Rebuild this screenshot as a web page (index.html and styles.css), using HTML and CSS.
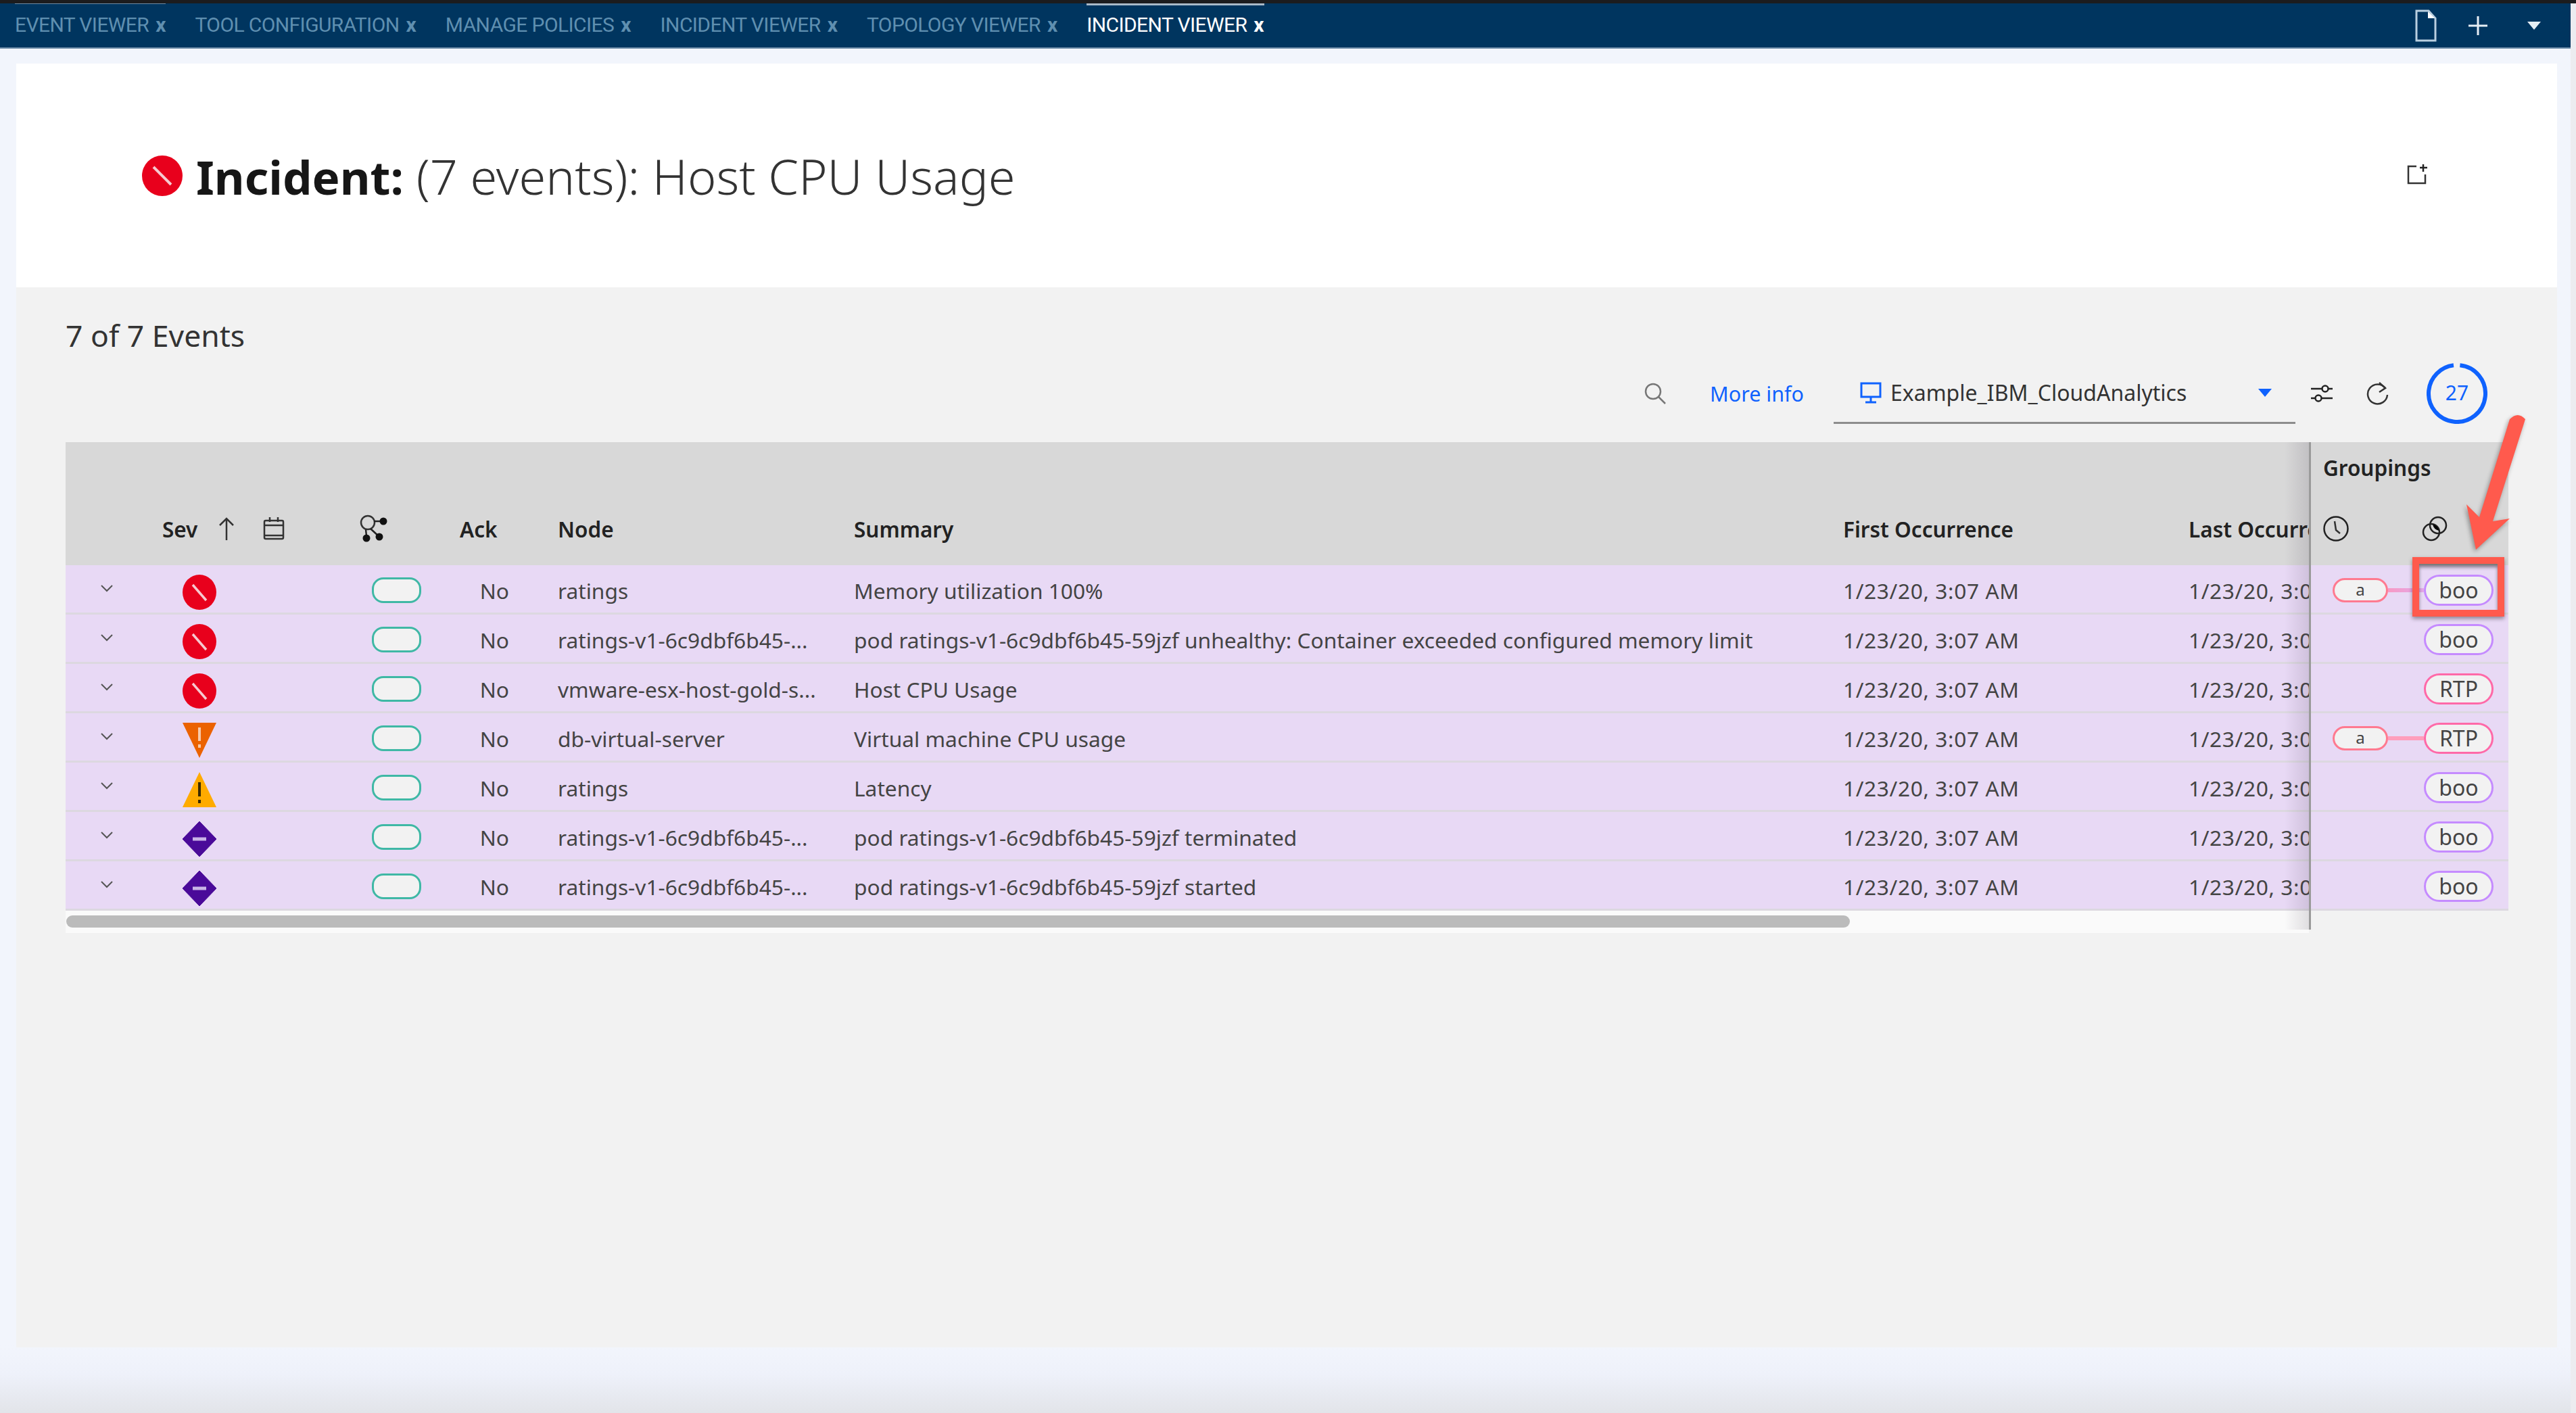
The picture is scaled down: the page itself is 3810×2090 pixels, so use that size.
FILE: index.html
```html
<!DOCTYPE html>
<html>
    <head>
        <meta charset="utf-8">
        <title>Incident Viewer</title>
        <link rel="stylesheet" href="styles.css">
    </head>
    <body>
        <!-- icons used several times -->
        <svg class="defs" width="0" height="0">
            <symbol id="sev-critical" viewBox="0 0 50 52">
                <ellipse cx="25" cy="26" rx="25" ry="26" fill="#e8001c"/>
                <path d="M15 15 L35 38" stroke="#f6c9d0" stroke-width="3.5"/>
            </symbol>
            <symbol id="sev-major" viewBox="0 0 50 52">
                <path d="M0 0 H50 L25 52 Z" fill="#eb6200"/>
                <path d="M25 7 V27 M25 32 V37" stroke="#f7c9a8" stroke-width="4"/>
            </symbol>
            <symbol id="sev-minor" viewBox="0 0 50 52">
                <path d="M25 0 L50 52 H0 Z" fill="#ffab00"/>
                <path d="M25 15 V36 M25 41 V46" stroke="#3b2a00" stroke-width="4"/>
            </symbol>
            <symbol id="sev-info" viewBox="0 0 50 52">
                <path d="M25 0 L50 26 L25 52 L0 26 Z" fill="#4a0a99" stroke="#4a0a99" stroke-width="1" stroke-linejoin="round"/>
                <path d="M15 26 H35" stroke="#c9b4e6" stroke-width="5"/>
            </symbol>
            <symbol id="chevron" viewBox="0 0 20 12">
                <path d="M2 2 L10 10 L18 2" fill="none" stroke="#555" stroke-width="2"/>
            </symbol>
        </svg>

        <div class="app">
            <nav class="tabs">
                <a class="tab tab-first">EVENT VIEWER<span class="tab-close">x</span></a>
                <a class="tab">TOOL CONFIGURATION<span class="tab-close">x</span></a>
                <a class="tab">MANAGE POLICIES<span class="tab-close">x</span></a>
                <a class="tab">INCIDENT VIEWER<span class="tab-close">x</span></a>
                <a class="tab">TOPOLOGY VIEWER<span class="tab-close">x</span></a>
                <a class="tab tab-active">INCIDENT VIEWER<span class="tab-close">x</span></a>
                <div class="tab-actions">
                    <svg class="icon-doc" viewBox="0 0 32 48"><path d="M2 2 H20 L30 13 V46 H2 Z" fill="none" stroke="#b9cfe0" stroke-width="3"/><path d="M19 3 L29 13 H19 Z" fill="#fff"/></svg>
                    <svg class="icon-plus" viewBox="0 0 28 28"><path d="M14 0 V28 M0 14 H28" stroke="#e6eef5" stroke-width="3"/></svg>
                    <svg class="icon-caret" viewBox="0 0 20 12"><path d="M0 0 H20 L10 12 Z" fill="#e6eef5"/></svg>
                </div>
            </nav>

            <main class="page">
                <header class="title-panel">
                    <svg class="title-icon" viewBox="0 0 60 60">
                        <circle cx="30" cy="30" r="30" fill="#e8001c"/>
                        <path d="M17 17 L43 43" stroke="#f6c9d0" stroke-width="4"/>
                    </svg>
                    <h1 class="title"><b>Incident:</b> (7 events): Host CPU Usage</h1>
                    <svg class="icon-add" viewBox="0 0 30 30"><path d="M14 3 H2 V28 H27 V15" fill="none" stroke="#333" stroke-width="2.5"/><path d="M24 0 V11 M19 5 H30" stroke="#222" stroke-width="2.5"/></svg>
                </header>

                <section class="events">
                    <h2 class="count">7 of 7 Events</h2>

                    <div class="toolbar">
                        <svg class="icon-search" viewBox="0 0 34 34"><circle cx="14" cy="14" r="11" fill="none" stroke="#777" stroke-width="2.5"/><path d="M22 22 L32 32" stroke="#777" stroke-width="2.5"/></svg>
                        <a class="more-info">More info</a>
                        <div class="dropdown">
                            <svg class="icon-monitor" viewBox="0 0 32 32"><rect x="2" y="2" width="28" height="20" fill="none" stroke="#0f62fe" stroke-width="3"/><path d="M16 22 V29 M8 30 H24" stroke="#0f62fe" stroke-width="3"/></svg>
                            <span class="dropdown-text">Example_IBM_CloudAnalytics</span>
                            <svg class="icon-drop" viewBox="0 0 20 12"><path d="M0 0 H20 L10 12 Z" fill="#0f62fe"/></svg>
                        </div>
                        <svg class="icon-sliders" viewBox="0 0 36 32"><path d="M2 9 H34 M2 23 H34" stroke="#222" stroke-width="2.5"/><circle cx="23" cy="9" r="4.5" fill="#f2f2f2" stroke="#222" stroke-width="2.5"/><circle cx="13" cy="23" r="4.5" fill="#f2f2f2" stroke="#222" stroke-width="2.5"/></svg>
                        <svg class="icon-refresh" viewBox="0 0 36 36"><path d="M29 10 A14.5 14.5 0 1 0 32 20" fill="none" stroke="#333" stroke-width="2.5"/><path d="M20 2 L29 10 L20 16" fill="none" stroke="#333" stroke-width="2.5"/></svg>
                        <svg class="ring" viewBox="0 0 90 90">
                            <circle cx="45" cy="45" r="42" fill="none" stroke="#0f62fe" stroke-width="6" stroke-dasharray="254 10" transform="rotate(-84 45 45)"/>
                            <text class="ring-text" x="45" y="55" text-anchor="middle">27</text>
                        </svg>
                    </div>

                    <div class="table">
                        <div class="table-main">
                            <div class="grid head">
                                <span></span>
                                <span class="head-sev">Sev
                                    <svg class="icon-up" viewBox="0 0 24 36"><path d="M12 35 V3 M2 13 L12 3 L22 13" fill="none" stroke="#333" stroke-width="2.5"/></svg>
                                    <svg class="icon-cal" viewBox="0 0 32 34"><rect x="2" y="5" width="28" height="27" rx="2" fill="none" stroke="#333" stroke-width="2.5"/><path d="M2 12 H30 M2 27 H30 M10 0 V7 M22 0 V7" stroke="#333" stroke-width="2.5"/></svg>
                                </span>
                                <span><svg class="icon-cluster" viewBox="0 0 42 42"><circle cx="13" cy="12" r="10" fill="none" stroke="#333" stroke-width="2.5"/><path d="M22 10 H36 M17 21 L29 32 M10 22 L11 32" stroke="#222" stroke-width="2.5"/><circle cx="36" cy="10" r="5.5" fill="#111"/><circle cx="11" cy="35" r="5.5" fill="#111"/><circle cx="30" cy="33" r="5.5" fill="#111"/></svg></span>
                                <span>Ack</span>
                                <span>Node</span>
                                <span>Summary</span>
                                <span>First Occurrence</span>
                                <span>Last Occurrence</span>
                            </div>

                            <div class="grid row">
                                <svg class="chevron"><use href="#chevron"/></svg>
                                <svg class="sev"><use href="#sev-critical"/></svg>
                                <i class="pill"></i>
                                <span class="ack">No</span>
                                <span class="cell">ratings</span>
                                <span class="cell">Memory utilization 100%</span>
                                <span class="cell date">1/23/20, 3:07 AM</span>
                                <span class="cell date">1/23/20, 3:07 AM</span>
                            </div>
                            <div class="grid row">
                                <svg class="chevron"><use href="#chevron"/></svg>
                                <svg class="sev"><use href="#sev-critical"/></svg>
                                <i class="pill"></i>
                                <span class="ack">No</span>
                                <span class="cell">ratings-v1-6c9dbf6b45-...</span>
                                <span class="cell">pod ratings-v1-6c9dbf6b45-59jzf unhealthy: Container exceeded configured memory limit</span>
                                <span class="cell date">1/23/20, 3:07 AM</span>
                                <span class="cell date">1/23/20, 3:07 AM</span>
                            </div>
                            <div class="grid row">
                                <svg class="chevron"><use href="#chevron"/></svg>
                                <svg class="sev"><use href="#sev-critical"/></svg>
                                <i class="pill"></i>
                                <span class="ack">No</span>
                                <span class="cell">vmware-esx-host-gold-s...</span>
                                <span class="cell">Host CPU Usage</span>
                                <span class="cell date">1/23/20, 3:07 AM</span>
                                <span class="cell date">1/23/20, 3:07 AM</span>
                            </div>
                            <div class="grid row">
                                <svg class="chevron"><use href="#chevron"/></svg>
                                <svg class="sev"><use href="#sev-major"/></svg>
                                <i class="pill"></i>
                                <span class="ack">No</span>
                                <span class="cell">db-virtual-server</span>
                                <span class="cell">Virtual machine CPU usage</span>
                                <span class="cell date">1/23/20, 3:07 AM</span>
                                <span class="cell date">1/23/20, 3:07 AM</span>
                            </div>
                            <div class="grid row">
                                <svg class="chevron"><use href="#chevron"/></svg>
                                <svg class="sev"><use href="#sev-minor"/></svg>
                                <i class="pill"></i>
                                <span class="ack">No</span>
                                <span class="cell">ratings</span>
                                <span class="cell">Latency</span>
                                <span class="cell date">1/23/20, 3:07 AM</span>
                                <span class="cell date">1/23/20, 3:07 AM</span>
                            </div>
                            <div class="grid row">
                                <svg class="chevron"><use href="#chevron"/></svg>
                                <svg class="sev"><use href="#sev-info"/></svg>
                                <i class="pill"></i>
                                <span class="ack">No</span>
                                <span class="cell">ratings-v1-6c9dbf6b45-...</span>
                                <span class="cell">pod ratings-v1-6c9dbf6b45-59jzf terminated</span>
                                <span class="cell date">1/23/20, 3:07 AM</span>
                                <span class="cell date">1/23/20, 3:07 AM</span>
                            </div>
                            <div class="grid row">
                                <svg class="chevron"><use href="#chevron"/></svg>
                                <svg class="sev"><use href="#sev-info"/></svg>
                                <i class="pill"></i>
                                <span class="ack">No</span>
                                <span class="cell">ratings-v1-6c9dbf6b45-...</span>
                                <span class="cell">pod ratings-v1-6c9dbf6b45-59jzf started</span>
                                <span class="cell date">1/23/20, 3:07 AM</span>
                                <span class="cell date">1/23/20, 3:07 AM</span>
                            </div>

                            <div class="scrollbar"><div class="scroll-thumb"></div></div>
                        </div>

                        <div class="groupings">
                            <div class="group-head">
                                <div class="group-title">Groupings</div>
                                <div class="group-icons">
                                    <svg class="icon-clock" viewBox="0 0 38 38"><circle cx="19" cy="19" r="17.5" fill="none" stroke="#222" stroke-width="2.5"/><path d="M17 8 L19 21 L25 26" fill="none" stroke="#333" stroke-width="2.5"/></svg>
                                    <svg class="icon-overlap" viewBox="0 0 38 38"><circle cx="14" cy="24" r="12" fill="none" stroke="#222" stroke-width="2.5"/><circle cx="24" cy="14" r="12" fill="none" stroke="#222" stroke-width="2.5"/><path d="M16 12.5 A12 12 0 0 1 25.5 22 A12 12 0 0 1 16 12.5 Z" fill="#000"/></svg>
                                </div>
                            </div>
                            <div class="group-row"><span class="tag-a">a</span><i class="link link-boo"></i><span class="tag tag-boo">boo</span></div>
                            <div class="group-row"><span class="tag tag-boo">boo</span></div>
                            <div class="group-row"><span class="tag tag-rtp">RTP</span></div>
                            <div class="group-row"><span class="tag-a">a</span><i class="link"></i><span class="tag tag-rtp">RTP</span></div>
                            <div class="group-row"><span class="tag tag-boo">boo</span></div>
                            <div class="group-row"><span class="tag tag-boo">boo</span></div>
                            <div class="group-row"><span class="tag tag-boo">boo</span></div>
                        </div>

                        <!-- annotation over the table -->
                        <div class="callout-box"></div>
                        <svg class="callout-arrow" viewBox="0 0 150 230"><path d="M62 213 L48 146 L67 165 L112 20 Q124 8 135 20 L87 171 L112 167 Z" fill="#ff5a4d"/></svg>
                    </div>
                </section>
            </main>
        </div>
    </body>
</html>
```

FILE: styles.css
```css
* {
    margin: 0;
    padding: 0;
    box-sizing: border-box;
}
html, body {
    height: 2090px;
    overflow: hidden;
}
body {
    background: #ececf0;
    border-top: 5px solid #1c1c1e;
    font-family: "Noto Sans", "Liberation Sans", sans-serif;
    color: #333;
}
.defs {
    display: block;
    height: 0;
}
.app {
    width: 3802px;
    height: 2085px;
    background: linear-gradient(to bottom, #f2f5fc 1985px, #eef1fa 2028px, #e2e4e9 2085px);
}

/* top tab bar */
.tabs {
    height: 67px;
    background: #00355f;
    border-bottom: 2px solid #6c8ba6;
    display: flex;
    align-items: center;
    padding-left: 22px;
    gap: 43px;
}
.tab {
    position: relative;
    height: 65px;
    line-height: 64px;
    font-family: "Roboto", sans-serif;
    font-size: 30px;
    letter-spacing: -0.6px;
    color: #5f8fb0;
    white-space: nowrap;
}
.tab-close {
    margin-left: 10px;
    font-weight: 700;
    font-size: 30px;
    letter-spacing: 0;
}
.tab-first::before, .tab-active::before {
    content: "";
    position: absolute;
    left: 0;
    right: 0;
    top: -1px;
    height: 2px;
    background: #6c8ba6;
}
.tab-active {
    color: #fff;
}
.tab-active::before {
    height: 4px;
    background: #a9b9c8;
}
.tab-actions {
    margin-left: auto;
    display: flex;
    align-items: center;
    padding-right: 44px;
}
.icon-doc {
    width: 32px;
    height: 48px;
}
.icon-plus {
    width: 28px;
    height: 28px;
    margin-left: 47px;
}
.icon-caret {
    width: 20px;
    height: 12px;
    margin-left: 59px;
}

/* page */
.page {
    margin: 22px 20px 0 24px;
    height: 1899px;
    display: flex;
    flex-direction: column;
}
.title-panel {
    height: 331px;
    flex: none;
    background: #fff;
    display: flex;
    align-items: center;
    padding: 0 192px 0 186px;
}
.title-icon {
    width: 60px;
    height: 60px;
    flex: none;
}
.title {
    margin-left: 20px;
    font-size: 72px;
    font-weight: 300;
    color: #333;
    white-space: nowrap;
}
.title b {
    font-size: 69px;
    font-weight: 700;
    color: #161616;
}
.icon-add {
    width: 30px;
    height: 30px;
    margin-left: auto;
    margin-top: -4px;
}

.events {
    flex: 1;
    background: #f2f2f2;
    padding: 44px 72px 0 73px;
}
.count {
    font-size: 44.5px;
    font-weight: 400;
    line-height: 54px;
    color: #333;
}
.toolbar {
    height: 90px;
    margin-top: 14px;
    display: flex;
    justify-content: flex-end;
    align-items: center;
    padding-right: 31px;
}
.icon-search {
    width: 34px;
    height: 34px;
}
.more-info {
    margin-left: 64px;
    font-size: 30.5px;
    color: #0f62fe;
}
.dropdown {
    width: 683px;
    height: 90px;
    margin-left: 44px;
    border-bottom: 3px solid #8d8d8d;
    display: flex;
    align-items: center;
    padding: 0 35px 0 39px;
    font-size: 32px;
}
.icon-monitor {
    width: 32px;
    height: 32px;
}
.dropdown-text {
    margin-left: 13px;
}
.icon-drop {
    width: 20px;
    height: 12px;
    margin-left: auto;
}
.icon-sliders {
    width: 36px;
    height: 32px;
    margin-left: 21px;
}
.icon-refresh {
    width: 36px;
    height: 36px;
    margin-left: 47px;
}
.ring {
    width: 90px;
    height: 90px;
    margin-left: 54px;
}
.ring-text {
    font-size: 30px;
    fill: #0f62fe;
}

/* table */
.table {
    position: relative;
    margin-top: 27px;
    display: flex;
    align-items: flex-start;
}
.table-main {
    width: 3318px;
    overflow: hidden;
    flex: none;
}
.grid {
    display: grid;
    grid-template-columns: 143px 310px 130px 145px 438px 1463px 511px 400px;
    align-items: center;
    white-space: nowrap;
}
.head {
    height: 182px;
    padding-top: 74px;
    background: #d8d8d8;
    font-size: 31.5px;
    font-weight: 600;
    color: #222;
}
.head-sev {
    display: flex;
    align-items: center;
}
.icon-up {
    width: 24px;
    height: 36px;
    margin-left: 31px;
}
.icon-cal {
    width: 32px;
    height: 34px;
    margin-left: 42px;
}
.icon-cluster {
    display: block;
    width: 42px;
    height: 42px;
    margin-left: -19px;
}
.row {
    height: 73px;
    background: #e8d9f5;
    border-bottom: 3px solid #dcd8e0;
    font-size: 31.7px;
    color: #444;
}
.cell, .ack {
    padding-top: 4px;
}
.date {
    letter-spacing: 0.6px;
}
.chevron {
    width: 20px;
    height: 12px;
    margin: -2px 0 0 51px;
}
.sev {
    width: 50px;
    height: 52px;
    margin: 10px 0 0 30px;
}
.pill {
    display: block;
    width: 73px;
    height: 38px;
    margin-top: 4px;
    border: 3px solid #3fb8a5;
    border-radius: 17px;
    background: #f2f2f2;
}
.ack {
    width: 73px;
    text-align: right;
}
.scrollbar {
    height: 33px;
    background: #fafafa;
    padding: 7px 0 0 1px;
}
.scroll-thumb {
    width: 2638px;
    height: 18px;
    background: #bbb;
    border-radius: 9px;
}

/* sticky groupings column */
.groupings {
    position: relative;
    width: 295px;
    flex: none;
    height: 721px;
    border-left: 3px solid #9a9a9a;
    background: #f2f2f2;
}
.groupings::before {
    content: "";
    position: absolute;
    left: -39px;
    top: 0;
    bottom: 0;
    width: 36px;
    background: linear-gradient(to right, rgba(60, 50, 70, 0), rgba(60, 50, 70, 0.14));
}
.group-head {
    height: 182px;
    background: #d8d8d8;
    padding: 18px 0 0 18px;
    font-size: 31.5px;
    font-weight: 600;
    color: #222;
}
.group-title {
    line-height: 40px;
}
.group-icons {
    display: flex;
    margin-top: 51px;
}
.icon-clock, .icon-overlap {
    width: 38px;
    height: 38px;
}
.icon-overlap {
    margin-left: 108px;
}
.group-row {
    height: 73px;
    background: #e8d9f5;
    border-bottom: 3px solid #dcd8e0;
    display: flex;
    justify-content: flex-end;
    align-items: center;
    padding: 4px 22px 0 0;
}
.tag, .tag-a {
    display: block;
    background: #f2f2f2;
    text-align: center;
    color: #444;
}
.tag {
    width: 103px;
    height: 46px;
    line-height: 39px;
    border: 3px solid;
    border-radius: 23px;
    font-size: 32px;
}
.tag-boo {
    border-color: #c58bff;
}
.tag-rtp {
    border-color: #ff69a8;
}
.tag-a {
    width: 82px;
    height: 36px;
    line-height: 28px;
    border: 3px solid #ff7a90;
    border-radius: 18px;
    font-size: 24px;
}
.link {
    display: block;
    width: 53px;
    height: 6px;
    background: #ff9ebc;
}
.link-boo {
    background: linear-gradient(to right, #f79ac4, #e3a8ea);
}

/* red annotation */
.callout-box {
    position: absolute;
    left: 3471px;
    top: 170px;
    width: 136px;
    height: 88px;
    border: 10px solid #ff5a4d;
    box-shadow: 0 3px 6px rgba(0, 0, 0, 0.4), inset 0 5px 5px rgba(0, 0, 0, 0.45);
}
.callout-arrow {
    position: absolute;
    left: 3503px;
    top: -54px;
    width: 150px;
    height: 230px;
    filter: drop-shadow(-2px 3px 3px rgba(0, 0, 0, 0.35));
}
```
